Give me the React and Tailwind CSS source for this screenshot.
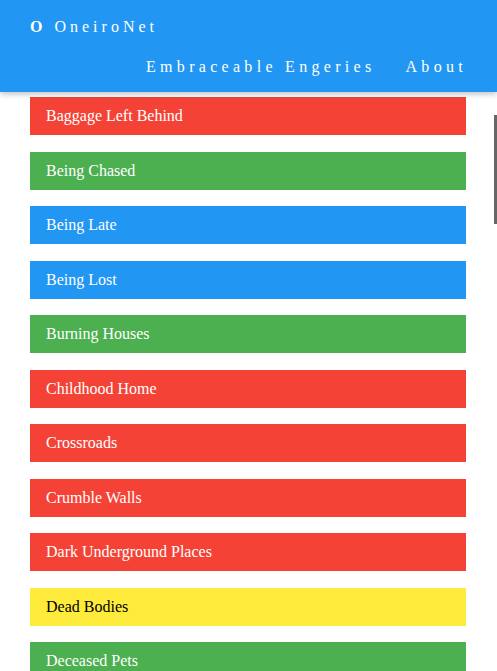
import React from "react";

const items = [
  { name: "Baggage Left Behind", color: "red" },
  { name: "Being Chased", color: "green" },
  { name: "Being Late", color: "blue" },
  { name: "Being Lost", color: "blue" },
  { name: "Burning Houses", color: "green" },
  { name: "Childhood Home", color: "red" },
  { name: "Crossroads", color: "red" },
  { name: "Crumble Walls", color: "red" },
  { name: "Dark Underground Places", color: "red" },
  { name: "Dead Bodies", color: "yellow" },
  { name: "Deceased Pets", color: "green" },
  { name: "Dirty Water", color: "blue" },
];

const colorClass = {
  red: "bg-[#f44336] text-white",
  green: "bg-[#4caf50] text-white",
  blue: "bg-[#2196f3] text-white",
  yellow: "bg-[#ffeb3b] text-black",
};

const App = () => {
  return (
    <div
      className="relative h-[671px] overflow-hidden bg-white"
      style={{ fontFamily: '"Liberation Serif", "DejaVu Serif", serif' }}
    >
      <header className="relative z-10 h-[92px] bg-[#2196f3] text-white shadow-[0_2px_6px_rgba(0,0,0,0.25)]">
        <div className="pl-[30px] pt-[17px] text-[16px] leading-[20px] tracking-[4px]">
          <span className="font-bold">O</span> OneiroNet
        </div>
        <nav className="flex justify-end gap-[30px] pr-[30px] pt-[20px] text-[16px] leading-[20px] tracking-[4.3px]">
          <span>Embraceable Engeries</span>
          <span>About</span>
        </nav>
      </header>

      <ul className="w-[436px] ml-[30px] pt-[5px]">
        {items.map((item) => (
          <li
            key={item.name}
            className={`mb-[16.5px] flex h-[38px] items-center pl-[16px] text-[16px] ${colorClass[item.color]}`}
          >
            {item.name}
          </li>
        ))}
      </ul>

      <div className="absolute right-0 top-[115px] h-[109px] w-[3px] bg-[#666]" />
    </div>
  );
};

export default App;
